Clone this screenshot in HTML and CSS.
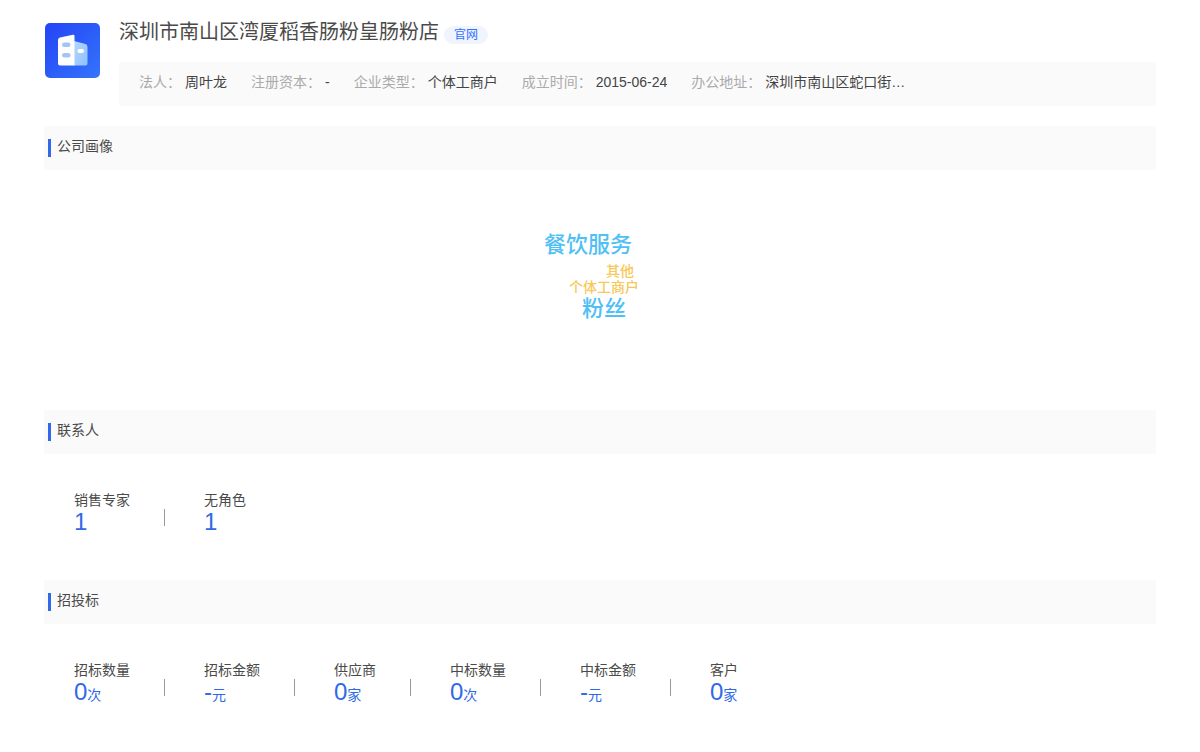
FILE: index.html
```html
<!DOCTYPE html>
<html lang="zh-CN">
<head>
<meta charset="utf-8">
<meta name="viewport" content="width=device-width, initial-scale=1">
<title>深圳市南山区湾厦稻香肠粉皇肠粉店</title>
<link rel="stylesheet" href="styles.css">
</head>
<body>
<main class="page">
  <header class="company">
    <svg class="company-logo" viewBox="0 0 55 55" aria-hidden="true">
      <defs>
        <linearGradient id="logo-bg" x1="0" y1="0" x2="1" y2="1">
          <stop offset="0" stop-color="#2444f6"/>
          <stop offset="1" stop-color="#3474fb"/>
        </linearGradient>
        <linearGradient id="logo-side" x1="0" y1="0" x2="1" y2="1">
          <stop offset="0" stop-color="#b4d8ff"/>
          <stop offset="1" stop-color="#8fc0fc"/>
        </linearGradient>
      </defs>
      <rect width="55" height="55" rx="5" fill="url(#logo-bg)"/>
      <path d="M29 18 L40.500 21 Q42.500 21.600 42.500 24 V40.500 Q42.500 42.500 40.500 42.500 H29Z" fill="url(#logo-side)"/>
      <path d="M15 14.500 L28 11.700 Q29.500 11.500 29.500 13 V42.500 H15 Q13 42.500 13 40.500 V17 Q13 15 15 14.500Z" fill="#fff"/>
      <rect x="17" y="19.500" width="8.500" height="4.600" rx="2.300" fill="#a3c4f5"/>
      <rect x="17" y="30" width="8.500" height="4.600" rx="2.300" fill="#a3c4f5"/>
      <rect x="32.500" y="26" width="6.500" height="4" rx="2" fill="#fff"/>
    </svg>
    <div class="company-body">
      <div class="company-heading">
        <h1 class="company-name">深圳市南山区湾厦稻香肠粉皇肠粉店</h1>
        <a class="site-link" href="#">官网</a>
      </div>
      <dl class="facts">
        <div class="fact"><dt>法人：</dt><dd>周叶龙</dd></div>
        <div class="fact"><dt>注册资本：</dt><dd>-</dd></div>
        <div class="fact"><dt>企业类型：</dt><dd>个体工商户</dd></div>
        <div class="fact"><dt>成立时间：</dt><dd>2015-06-24</dd></div>
        <div class="fact"><dt>办公地址：</dt><dd>深圳市南山区蛇口街…</dd></div>
      </dl>
    </div>
  </header>

  <section>
    <h2 class="section-title">公司画像</h2>
    <div class="cloud">
      <div class="cloud-words">
        <span class="word word-large word-catering">餐饮服务</span>
        <span class="word word-small word-other">其他</span>
        <span class="word word-small word-individual">个体工商户</span>
        <span class="word word-large word-fans">粉丝</span>
      </div>
    </div>
  </section>

  <section>
    <h2 class="section-title">联系人</h2>
    <dl class="stats">
      <div class="stat"><dt>销售专家</dt><dd>1</dd></div>
      <div class="stat"><dt>无角色</dt><dd>1</dd></div>
    </dl>
  </section>

  <section>
    <h2 class="section-title">招投标</h2>
    <dl class="stats">
      <div class="stat"><dt>招标数量</dt><dd>0<small>次</small></dd></div>
      <div class="stat"><dt>招标金额</dt><dd>-<small>元</small></dd></div>
      <div class="stat"><dt>供应商</dt><dd>0<small>家</small></dd></div>
      <div class="stat"><dt>中标数量</dt><dd>0<small>次</small></dd></div>
      <div class="stat"><dt>中标金额</dt><dd>-<small>元</small></dd></div>
      <div class="stat"><dt>客户</dt><dd>0<small>家</small></dd></div>
    </dl>
  </section>
</main>
</body>
</html>
```
FILE: styles.css
```css
* {
  box-sizing: border-box;
}

body,
h1,
h2,
dl,
dd {
  margin: 0;
}

body {
  background: #fff;
  color: #4a4a4a;
  font-family: "Liberation Sans", "Noto Sans CJK SC", sans-serif;
  font-size: 14px;
  line-height: 20px;
}

.page {
  padding: 16px 44px;
}

.company {
  display: flex;
  gap: 19px;
  padding-left: 1px;
  margin-bottom: 20px;
}

.company-logo {
  flex: none;
  width: 55px;
  height: 55px;
  margin-top: 7px;
}

.company-body {
  flex: 1;
  min-width: 0;
}

.company-heading {
  display: flex;
  align-items: flex-start;
  gap: 5px;
  margin-bottom: 14px;
}

.company-name {
  font-size: 20px;
  font-weight: 400;
  line-height: 32px;
}

.site-link {
  margin-top: 10px;
  padding: 0 10px;
  border-radius: 9px;
  background: #eff4fe;
  color: #3370ff;
  font-size: 12px;
  line-height: 18px;
  text-decoration: none;
}

.facts {
  display: flex;
  flex-wrap: wrap;
  gap: 0 24px;
  padding: 10px 20px 14px;
  background: #fafafa;
}

.fact {
  display: flex;
  gap: 4px;
}

.fact dt {
  color: #aaa;
}

.fact dd {
  color: #444;
}

.section-title {
  display: flex;
  align-items: flex-start;
  gap: 6px;
  padding: 10px 4px 13px;
  background: #fafafa;
  font-size: 14px;
  font-weight: 400;
}

.section-title::before {
  content: "";
  width: 3px;
  height: 18px;
  margin-top: 3px;
  background: #3069e8;
}

.cloud {
  display: flex;
  justify-content: center;
  height: 240px;
}

.cloud-words {
  position: relative;
  width: 112px;
}

.word {
  position: absolute;
  font-weight: 500;
  white-space: nowrap;
}

.word-large {
  color: #4fc0f5;
  font-size: 22px;
  line-height: 32px;
}

.word-small {
  color: #f8c859;
  font-size: 14px;
}

.word-catering {
  left: 0;
  top: 59px;
}

.word-other {
  left: 62px;
  top: 91px;
}

.word-individual {
  left: 25px;
  top: 107px;
}

.word-fans {
  left: 38px;
  top: 123px;
}

.stats {
  display: flex;
  flex-wrap: wrap;
  padding: 36px 30px 46px;
}

.stat {
  display: flex;
  flex-direction: column;
  position: relative;
  margin-right: 74px;
}

.stat:last-child {
  margin-right: 0;
}

.stat:not(:last-child)::after {
  content: "";
  position: absolute;
  right: -35px;
  top: 19px;
  width: 1px;
  height: 17px;
  background: #999;
}

.stat dd {
  color: #3069e8;
  font-size: 24px;
  line-height: 24px;
}

.stat small {
  font-size: 14px;
  line-height: 14px;
}
```
